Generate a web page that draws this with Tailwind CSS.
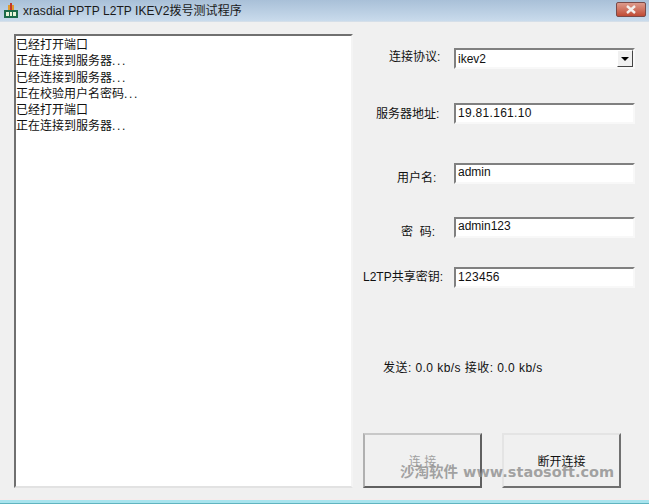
<!DOCTYPE html>
<html lang="zh-CN">
<head>
    <meta charset="UTF-8">
    <title>xrasdial PPTP L2TP IKEV2拨号测试程序</title>
    <script src="https://cdn.jsdelivr.net/npm/@tailwindcss/browser@4"></script>
</head>
<body class="bg-[#f0f0f0]">
<div class="relative w-[649px] h-[504px] overflow-hidden flex flex-col bg-[#f0f0f0] text-[#111] text-[12px] leading-[17px] font-['Liberation_Sans','Noto_Sans_CJK_SC',sans-serif]">

    <!-- title bar -->
    <div class="h-[22px] shrink-0 flex items-center bg-gradient-to-b from-[#a9c0d8] to-[#c9dbec] border-b border-[#d5dfe9]">
        <svg class="ml-[3px] w-[16px] h-[16px]" viewBox="0 0 16 16">
            <rect x="7" y="0" width="2" height="7" fill="#c0392b"/>
            <rect x="5" y="2" width="2" height="5" fill="#e09a2e"/>
            <rect x="9" y="2" width="2" height="5" fill="#e09a2e"/>
            <rect x="1" y="7" width="14" height="8" fill="#1c6b4a"/>
            <rect x="3" y="9" width="3" height="4" fill="#e8f4d8"/>
            <rect x="7" y="9" width="2" height="4" fill="#e8f4d8"/>
            <rect x="10" y="9" width="3" height="4" fill="#e8f4d8"/>
        </svg>
        <span class="ml-[4px] pt-[1px] text-[#1a1a1a] tracking-[0.06px]">xrasdial PPTP L2TP IKEV2拨号测试程序</span>
        <div class="ml-auto mr-[3px] self-start mt-[2px] w-[30px] h-[15px] flex items-center justify-center rounded-[2px] border border-[#7a4a48] bg-gradient-to-b from-[#dc9a8c] to-[#c04a34]">
            <svg class="w-[12px] h-[9px]" viewBox="0 0 12 9"><path d="M2 1l8 7M10 1l-8 7" stroke="#f4f0ee" stroke-width="2.4" fill="none"/></svg>
        </div>
    </div>

    <!-- client area -->
    <div class="flex-1 flex pl-[14px] pt-[12px]">
        <!-- log -->
        <div class="w-[339px] h-[454px] shrink-0 bg-white border-2 border-t-[#707070] border-l-[#707070] border-r-[#f4f4f4] border-b-[#e2e2e2] pt-[1px] leading-[16.3px]">
            <div>已经打开端口</div>
            <div>正在连接到服务器<span class="tracking-[1.7px]">...</span></div>
            <div>已经连接到服务器<span class="tracking-[1.7px]">...</span></div>
            <div>正在校验用户名密码<span class="tracking-[1.7px]">...</span></div>
            <div>已经打开端口</div>
            <div>正在连接到服务器<span class="tracking-[1.7px]">...</span></div>
        </div>

        <!-- form -->
        <div class="ml-[10px] flex-1 flex flex-col">
            <div class="mt-[14px] flex h-[21px]">
                <div class="w-[91px] pl-[26px] pt-[1px] whitespace-nowrap">连接协议:</div>
                <div class="w-[181px] h-[21px] bg-white border-2 border-t-[#808080] border-l-[#808080] border-r-[#f8f8f8] border-b-[#f8f8f8] flex items-center justify-between pl-[2px]">
                    <span class="pt-[1px]">ikev2</span>
                    <div class="w-[16px] h-[17px] bg-[#f0f0f0] border border-t-white border-l-white border-r-[#444] border-b-[#444] flex items-center justify-center">
                        <svg class="w-[8px] h-[4px]" viewBox="0 0 8 4"><path d="M0 0h8L4 4z" fill="#000"/></svg>
                    </div>
                </div>
            </div>
            <div class="mt-[34px] flex h-[21px]">
                <div class="w-[91px] pl-[13px] pt-[3px] whitespace-nowrap">服务器地址:</div>
                <div class="w-[181px] h-[21px] bg-white border-2 border-t-[#808080] border-l-[#808080] border-r-[#f8f8f8] border-b-[#f8f8f8] pl-[2px] tracking-[0.3px]">19.81.161.10</div>
            </div>
            <div class="mt-[39px] flex h-[21px]">
                <div class="w-[91px] pl-[34px] pt-[7px] whitespace-nowrap">用户名:</div>
                <div class="w-[181px] h-[21px] bg-white border-2 border-t-[#808080] border-l-[#808080] border-r-[#f8f8f8] border-b-[#f8f8f8] pl-[2px] leading-[15px]">admin</div>
            </div>
            <div class="mt-[33px] flex h-[21px]">
                <div class="w-[91px] pl-[38px] pt-[7px] whitespace-nowrap">密&nbsp;&nbsp;码:</div>
                <div class="w-[181px] h-[21px] bg-white border-2 border-t-[#808080] border-l-[#808080] border-r-[#f8f8f8] border-b-[#f8f8f8] pl-[2px] leading-[15px]">admin123</div>
            </div>
            <div class="mt-[29px] flex h-[21px]">
                <div class="w-[91px] pt-[2px] whitespace-nowrap">L2TP共享密钥:</div>
                <div class="w-[181px] h-[21px] bg-white border-2 border-t-[#808080] border-l-[#808080] border-r-[#f8f8f8] border-b-[#f8f8f8] pl-[2px] tracking-[0.3px]">123456</div>
            </div>
            <div class="mt-[72px] ml-[20px] h-[17px] whitespace-nowrap tracking-[0.44px]">发送: 0.0 kb/s 接收: 0.0 kb/s</div>
            <div class="mt-[56px] flex">
                <div class="w-[119px] h-[55px] pt-[3px] flex items-center justify-center text-[#a0a0a0] bg-[#f0f0f0] border-2 border-t-[#c8c8c8] border-l-[#b0b0b0] border-r-[#606060] border-b-[#606060]">连 接</div>
                <div class="ml-[20px] w-[119px] h-[55px] pt-[3px] flex items-center justify-center bg-[#f0f0f0] border-2 border-t-[#e4e4e4] border-l-[#e4e4e4] border-r-[#707070] border-b-[#707070]">断开连接</div>
            </div>
        </div>
    </div>

    <!-- window bottom edge -->
    <div class="h-[5px] shrink-0 bg-[#a8e4ee] border-t border-[#f7ecec] border-b border-b-[#5fb4c0]"></div>

    <!-- watermark -->
    <div class="absolute left-[400px] top-[462px] text-[14.5px] leading-[20px] font-bold text-[#8c8c8c]/80 whitespace-nowrap font-['DejaVu_Sans','Noto_Sans_CJK_SC',sans-serif]">沙淘软件 www.staosoft.com</div>
</div>
</body>
</html>
